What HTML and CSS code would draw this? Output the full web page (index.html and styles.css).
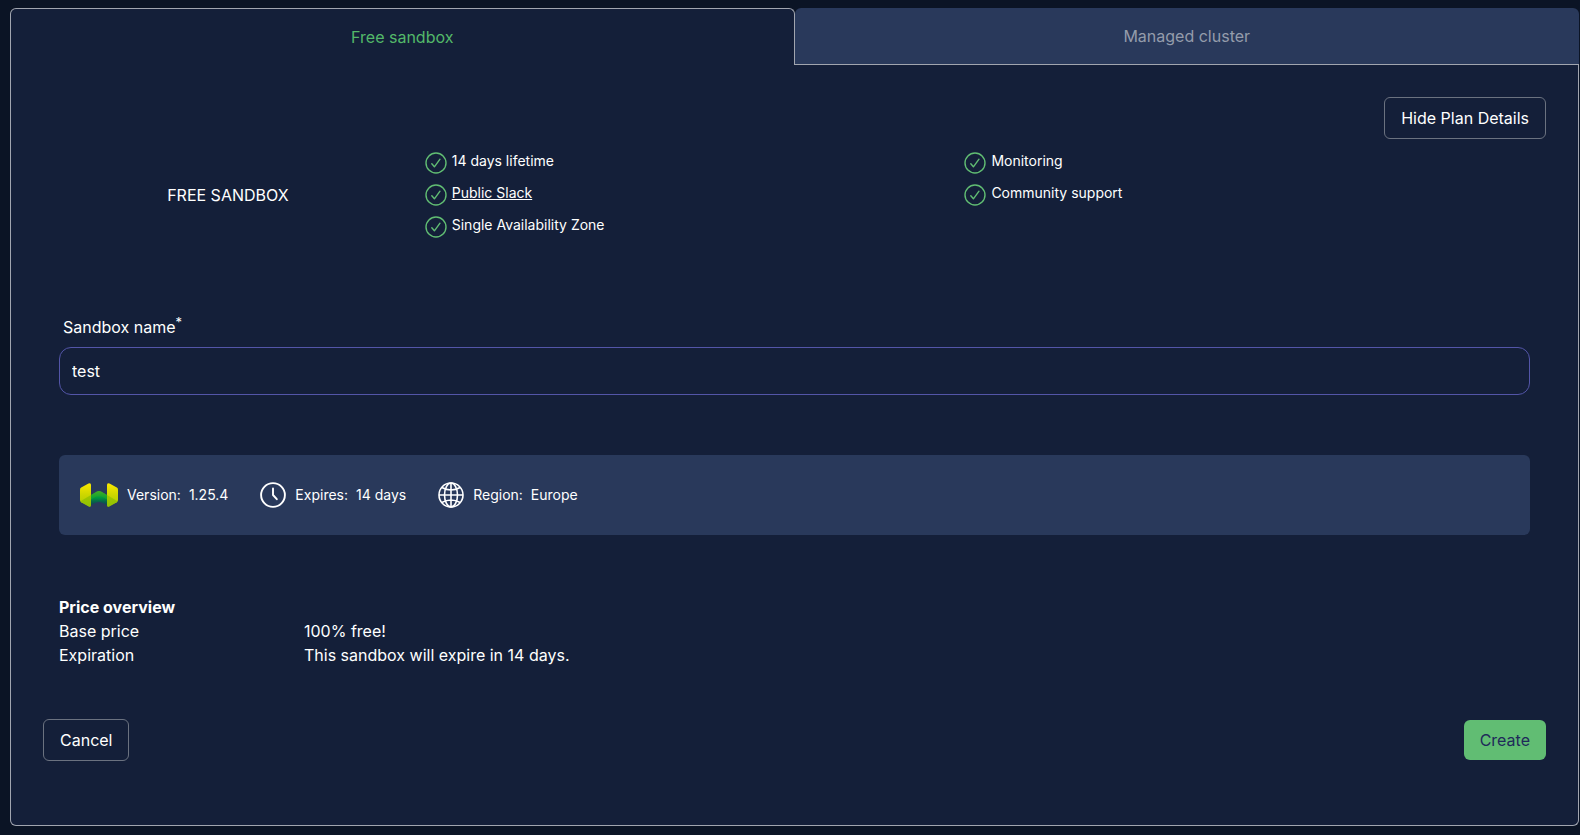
FILE: index.html
```html
<!DOCTYPE html>
<html lang="en">
<head>
<meta charset="utf-8">
<meta name="viewport" content="width=device-width, initial-scale=1">
<title>Create sandbox</title>
<link rel="stylesheet" href="styles.css">
</head>
<body>
<svg class="defs" aria-hidden="true">
  <symbol id="check" viewBox="0 0 22 22">
    <circle cx="11" cy="11" r="10" fill="none" stroke="currentColor" stroke-width="1.4"/>
    <path d="M6.8 11.8 9.4 14.8 15 7.2" fill="none" stroke="currentColor" stroke-width="1.4" stroke-linecap="round" stroke-linejoin="round"/>
  </symbol>
</svg>
<main class="panel">
  <div class="tabs" role="tablist">
    <button class="tab tab-active" type="button" role="tab" aria-selected="true">Free sandbox</button>
    <button class="tab" type="button" role="tab" aria-selected="false">Managed cluster</button>
  </div>
  <form class="body">
    <div class="toolbar">
      <button class="btn btn-outline" type="button">Hide Plan Details</button>
    </div>
    <section class="plan">
      <div class="plan-name">FREE SANDBOX</div>
      <ul class="features">
        <li class="feature"><svg class="check"><use href="#check"/></svg><span>14 days lifetime</span></li>
        <li class="feature"><svg class="check"><use href="#check"/></svg><a href="#slack">Public Slack</a></li>
        <li class="feature"><svg class="check"><use href="#check"/></svg><span>Single Availability Zone</span></li>
      </ul>
      <ul class="features">
        <li class="feature"><svg class="check"><use href="#check"/></svg><span>Monitoring</span></li>
        <li class="feature"><svg class="check"><use href="#check"/></svg><span>Community support</span></li>
      </ul>
    </section>
    <div class="fields">
      <div class="field">
        <label class="label" for="name">Sandbox name<sup>*</sup></label>
        <input class="input" id="name" type="text" value="test">
      </div>
      <div class="info">
        <div class="info-item">
          <svg class="logo" viewBox="0 0 38 24">
            <defs>
              <linearGradient id="yellow" x1="0" y1="0" x2="0" y2="1"><stop offset="0" stop-color="#fbe800"/><stop offset=".5" stop-color="#ccd600"/><stop offset="1" stop-color="#a4cc05"/></linearGradient>
              <linearGradient id="green" x1="0" y1="0" x2="0" y2="1"><stop offset="0" stop-color="#5fb41c"/><stop offset=".45" stop-color="#009a3c"/><stop offset=".75" stop-color="#08604c"/><stop offset="1" stop-color="#123f55"/></linearGradient>
            </defs>
            <path d="M10 12.500 16.500 8.800Q19 7.400 21.500 8.800L28 12.500V22.500L22.500 20Q19 18 15.500 20L10 22.500Z" fill="url(#green)"/>
            <path d="M0 6.500Q0 5.200 1.200 4.500L8.500.6Q11-.4 11 2V22Q11 24.600 8.800 23.500L1.200 19.200Q0 18.500 0 17Z" fill="url(#yellow)"/>
            <path d="M38 6.500Q38 5.200 36.800 4.500L29.500.6Q27-.4 27 2V22Q27 24.600 29.200 23.500L36.800 19.200Q38 18.500 38 17Z" fill="url(#yellow)"/>
            <path d="M.4 18.300 11 12V22Q11 24.600 8.800 23.500L1.200 19.200ZM37.600 18.300 27 12V22Q27 24.600 29.200 23.500L36.800 19.200Z" fill="#7fba00" opacity=".55"/>
            <path d="M11 12 16.500 8.800Q19 7.400 21.500 8.800L27 12V16.500L21.500 13.500Q19 12.200 16.500 13.500L11 16.500Z" fill="#22a82a" opacity=".5"/>
          </svg>
          <span>Version:</span><span>1.25.4</span>
        </div>
        <div class="info-item">
          <svg class="icon" viewBox="0 0 26 26" fill="none" stroke="currentColor" stroke-linecap="round" stroke-linejoin="round">
            <circle cx="13" cy="13" r="11.900" stroke-width="1.900"/>
            <path d="M13 6.500V13L16.800 17.200" stroke-width="1.900"/>
          </svg>
          <span>Expires:</span><span>14 days</span>
        </div>
        <div class="info-item">
          <svg class="icon" viewBox="0 0 26 26" fill="none" stroke="currentColor" stroke-width="1.600">
            <circle cx="13" cy="13" r="12"/>
            <ellipse cx="13" cy="13" rx="6.500" ry="12"/>
            <path d="M13 1V25M1 13H25M3.800 5.500Q13 10.500 22.200 5.500M3.800 20.500Q13 15.500 22.200 20.500"/>
          </svg>
          <span>Region:</span><span>Europe</span>
        </div>
      </div>
      <table class="prices">
        <caption>Price overview</caption>
        <tbody>
          <tr><th scope="row">Base price</th><td>100% free!</td></tr>
          <tr><th scope="row">Expiration</th><td>This sandbox will expire in 14 days.</td></tr>
        </tbody>
      </table>
    </div>
    <div class="actions">
      <button class="btn btn-outline" type="button">Cancel</button>
      <button class="btn btn-primary" type="submit">Create</button>
    </div>
  </form>
</main>
</body>
</html>
```
FILE: styles.css
```css
*, *::before, *::after { box-sizing: border-box; }

body {
  margin: 0;
  padding: 8px 1px 9px 10px;
  background: #0b1425;
  color: #fff;
  font: 400 16px/24px Inter, sans-serif;
}

button, input { font: inherit; color: inherit; }
button { cursor: pointer; }

.defs { position: absolute; width: 0; height: 0; }

.panel { background: #141f39; border-radius: 6px; }

.tabs { display: flex; background: #0b1425; }

.tab {
  width: 50%;
  padding: 16px;
  border: 0;
  border-bottom: 1px solid #a1a5af;
  border-radius: 6px 6px 0 0;
  background: #29395b;
  color: #949cab;
}

.tab-active {
  border: 1px solid #a1a5af;
  border-bottom: 0;
  background: #141f39;
  color: #53b869;
}

.body {
  padding: 32px 32px 64px;
  border: 1px solid #a1a5af;
  border-top: 0;
  border-radius: 0 0 6px 6px;
}

.toolbar { display: flex; justify-content: flex-end; }

.btn {
  padding: 8px 16px;
  border: 0;
  border-radius: 6px;
}

.btn-outline {
  border: 1px solid #6b7280;
  background: transparent;
}

.btn-primary { background: #61bd73; color: #1f2a5a; }

.plan {
  display: grid;
  grid-template-columns: 370fr 540fr 594fr;
  margin: 8px 0 72px;
}

.plan-name { align-self: center; text-align: center; }

.features { margin: 0; padding: 0 12px; list-style: none; }

.feature {
  display: flex;
  align-items: flex-start;
  gap: 5px;
  height: 32px;
  padding-top: 4px;
  font-size: 14px;
  line-height: 20px;
}

.feature a { color: inherit; text-underline-offset: 1px; }

.check {
  width: 22px;
  height: 22px;
  margin-top: 1px;
  color: #61bd73;
}

.fields { padding: 0 16px; }

.label { display: block; margin: 0 4px 8px; }
.label sup { font-size: 13px; line-height: 0; }

.input {
  display: block;
  width: 100%;
  height: 48px;
  padding: 0 12px;
  border: 1px solid #5355a8;
  border-radius: 12px;
  background: transparent;
  outline: 0;
}

.info {
  display: flex;
  align-items: center;
  gap: 32px;
  min-height: 80px;
  margin: 60px 0;
  padding: 0 20px;
  border-radius: 6px;
  background: #29395b;
  font-size: 14px;
}

.info-item { display: flex; align-items: center; gap: 8px; }
.icon { width: 26px; height: 26px; margin-right: 1px; }
.logo { width: 40px; height: 24px; }

.prices { border-spacing: 0; }
.prices caption { font-weight: 700; text-align: left; }
.prices th { width: 245px; padding: 0; font-weight: 400; text-align: left; }
.prices td { padding: 0; white-space: nowrap; }

.actions {
  display: flex;
  align-items: center;
  justify-content: space-between;
  margin-top: 52px;
}
```
